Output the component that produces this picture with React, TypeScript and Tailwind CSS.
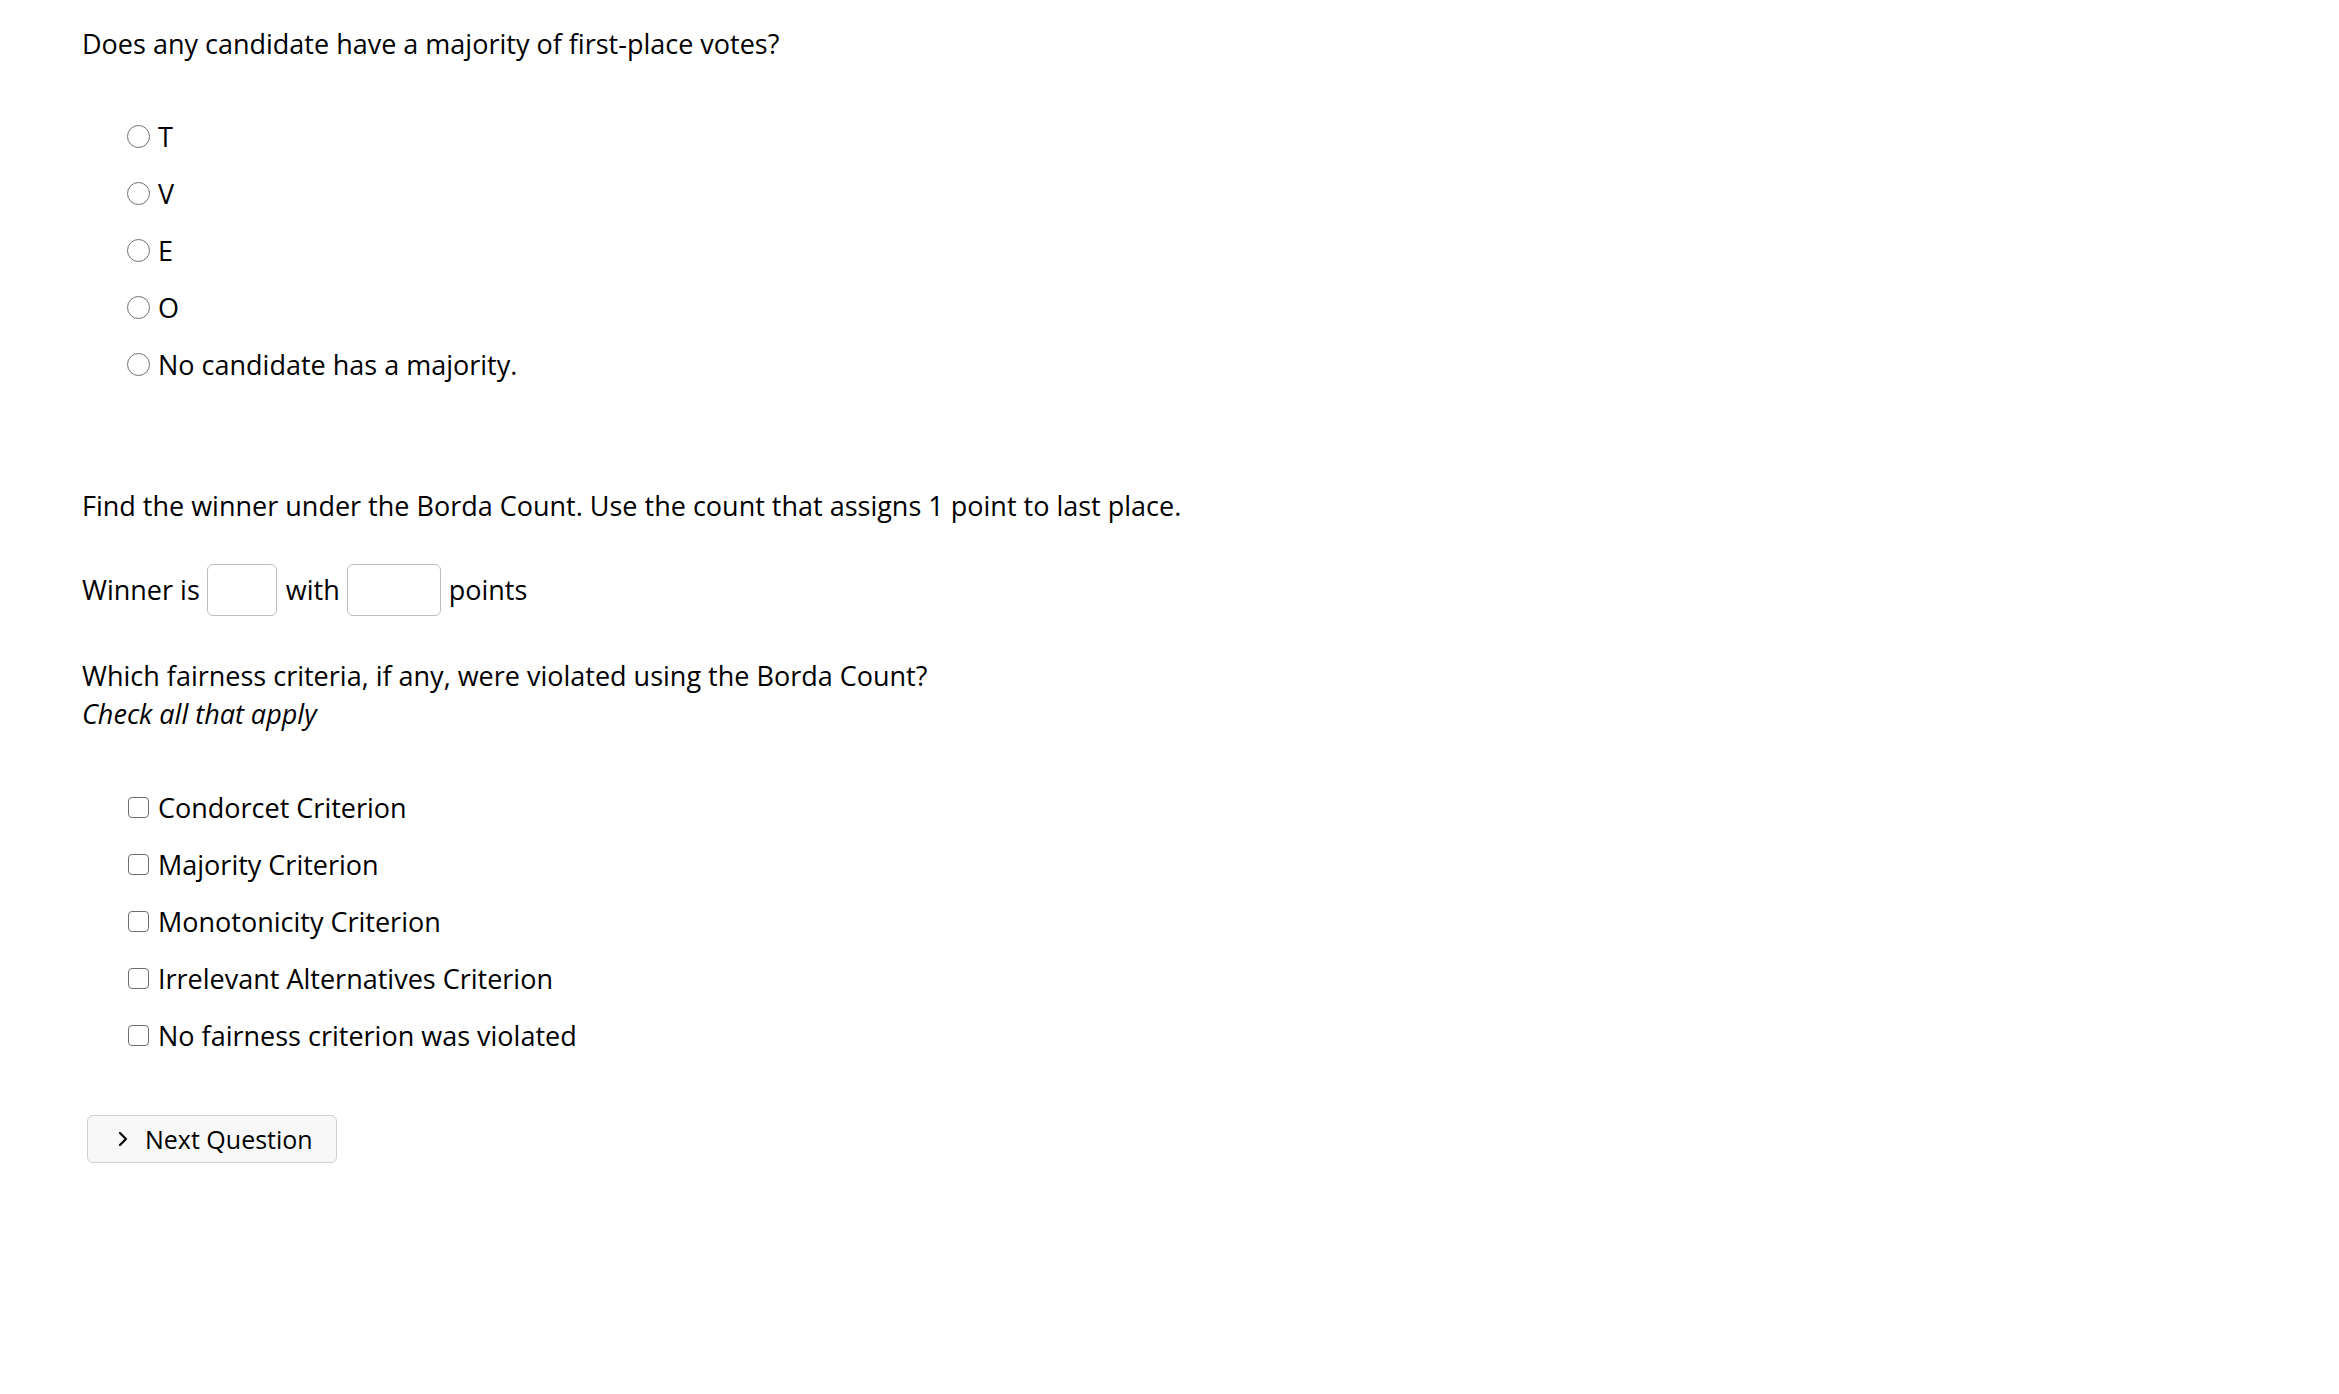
import React from "react";

const radios = ["T", "V", "E", "O", "No candidate has a majority."];
const checks = [
  "Condorcet Criterion",
  "Majority Criterion",
  "Monotonicity Criterion",
  "Irrelevant Alternatives Criterion",
  "No fairness criterion was violated",
];

export default function App() {
  return (
    <div className="min-h-[1394px] w-full bg-white font-['Open_Sans',sans-serif] text-[27px] leading-[38px] text-black pl-[82px] pt-[25px]">
      <p>Does any candidate have a majority of first-place votes?</p>

      <div className="mt-[45px] flex flex-col">
        {radios.map((r) => (
          <label key={r} className="flex h-[57px] items-center pl-[45px]">
            <span className="h-[23px] w-[23px] rounded-full border-[1.5px] border-[#6f6f6f] bg-white" />
            <span className="ml-[8px]">{r}</span>
          </label>
        ))}
      </div>

      <p className="mt-[94px]">
        Find the winner under the Borda Count. Use the count that assigns 1 point to last place.
      </p>

      <div className="mt-[39px] flex h-[52px] items-center">
        <span>Winner is</span>
        <span className="ml-[7px] h-[52px] w-[70px] rounded-[6px] border border-[#bdbdbd] bg-white" />
        <span className="ml-[9px]">with</span>
        <span className="ml-[7px] h-[52px] w-[94px] rounded-[6px] border border-[#bdbdbd] bg-white" />
        <span className="ml-[8px]">points</span>
      </div>

      <p className="mt-[41px]">Which fairness criteria, if any, were violated using the Borda Count?</p>
      <p className="italic">Check all that apply</p>

      <div className="mt-[46px] flex flex-col">
        {checks.map((c) => (
          <label key={c} className="flex h-[57px] items-center pl-[46px]">
            <span className="h-[21px] w-[21px] rounded-[4px] border-[1.5px] border-[#6f6f6f] bg-white" />
            <span className="ml-[9px]">{c}</span>
          </label>
        ))}
      </div>

      <button className="ml-[5px] mt-[51px] flex h-[48px] w-[250px] items-center rounded-[6px] border border-[#cfcfcf] bg-[#f8f8f8] pl-[29px] text-[25px] text-black">
        <svg width="12" height="18" viewBox="0 0 12 18" fill="none" className="mr-[16px]">
          <path d="M3 3 L9 9 L3 15" stroke="#000" strokeWidth="2.2" strokeLinecap="round" strokeLinejoin="round" />
        </svg>
        <span>Next Question</span>
      </button>
    </div>
  );
}
